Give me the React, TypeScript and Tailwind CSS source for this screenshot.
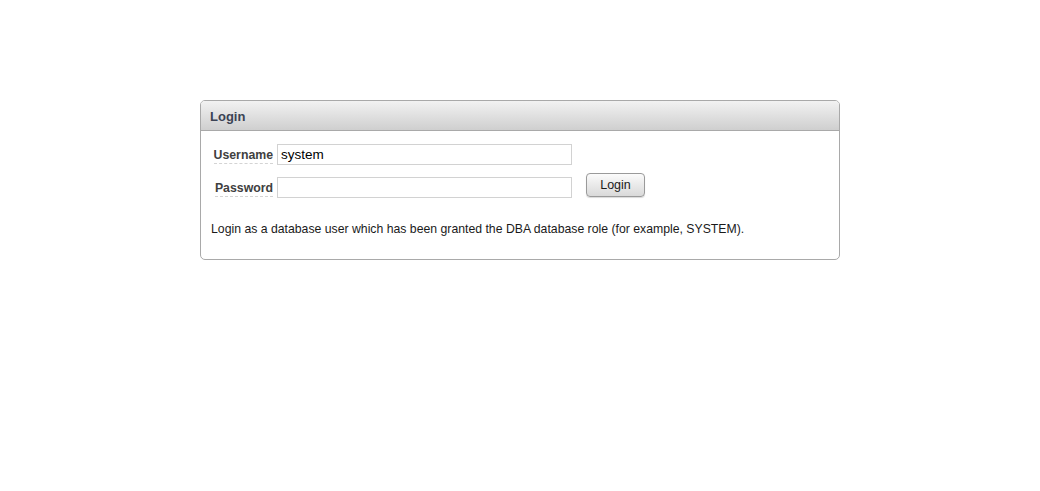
import React from "react";

export default function App() {
  return (
    <div className="min-h-[491px] w-full bg-white pt-[100px]" style={{ fontFamily: '"Liberation Sans", Arial, sans-serif' }}>
      <div className="mx-auto w-[640px] overflow-hidden rounded-[5px] border border-[#a9a9a9]">
        <div className="flex h-[30px] items-center border-b border-[#a9a9a9] bg-gradient-to-b from-[#f2f2f2] to-[#cfcfcf] pl-[9px] pt-[2px]">
          <span className="text-[13px] font-bold text-[#3b4354]">Login</span>
        </div>
        <div className="pl-[10px] pt-[13px] pb-[23px]">
          <div className="flex flex-col gap-[12px]">
            <div className="flex items-center">
              <div className="flex w-[62px] justify-end pt-[2px]">
                <span className="border-b border-dashed border-[#d4d4d4] text-[12.3px] font-bold leading-[15px] text-[#404040]">Username</span>
              </div>
              <input
                className="ml-[4px] h-[21px] w-[295px] border border-[#d2d2d2] px-[3px] text-[13.5px] text-black outline-none"
                style={{ fontFamily: '"Liberation Sans", Arial, sans-serif' }}
                defaultValue="system"
                readOnly
              />
            </div>
            <div className="flex items-start">
              <div className="flex h-[21px] w-[62px] items-center justify-end pt-[2px]">
                <span className="border-b border-dashed border-[#d4d4d4] text-[12.3px] font-bold leading-[15px] text-[#404040]">Password</span>
              </div>
              <input
                type="password"
                className="ml-[4px] h-[21px] w-[295px] border border-[#d2d2d2] px-[3px] text-[13px] outline-none"
                readOnly
              />
              <button
                className="-mt-[4px] ml-[14px] h-[24px] w-[59px] rounded-[4px] border border-[#9a9a9a] bg-gradient-to-b from-[#fbfbfb] to-[#d9d9d9] text-[12.5px] text-[#1a1a1a] shadow-[0_1px_1px_rgba(0,0,0,0.15)]"
                style={{ fontFamily: '"Liberation Sans", Arial, sans-serif' }}
              >
                Login
              </button>
            </div>
          </div>
          <p className="mt-[24px] text-[12.25px] leading-[14px] text-[#1a1a1a]">
            Login as a database user which has been granted the DBA database role (for example, SYSTEM).
          </p>
        </div>
      </div>
    </div>
  );
}
